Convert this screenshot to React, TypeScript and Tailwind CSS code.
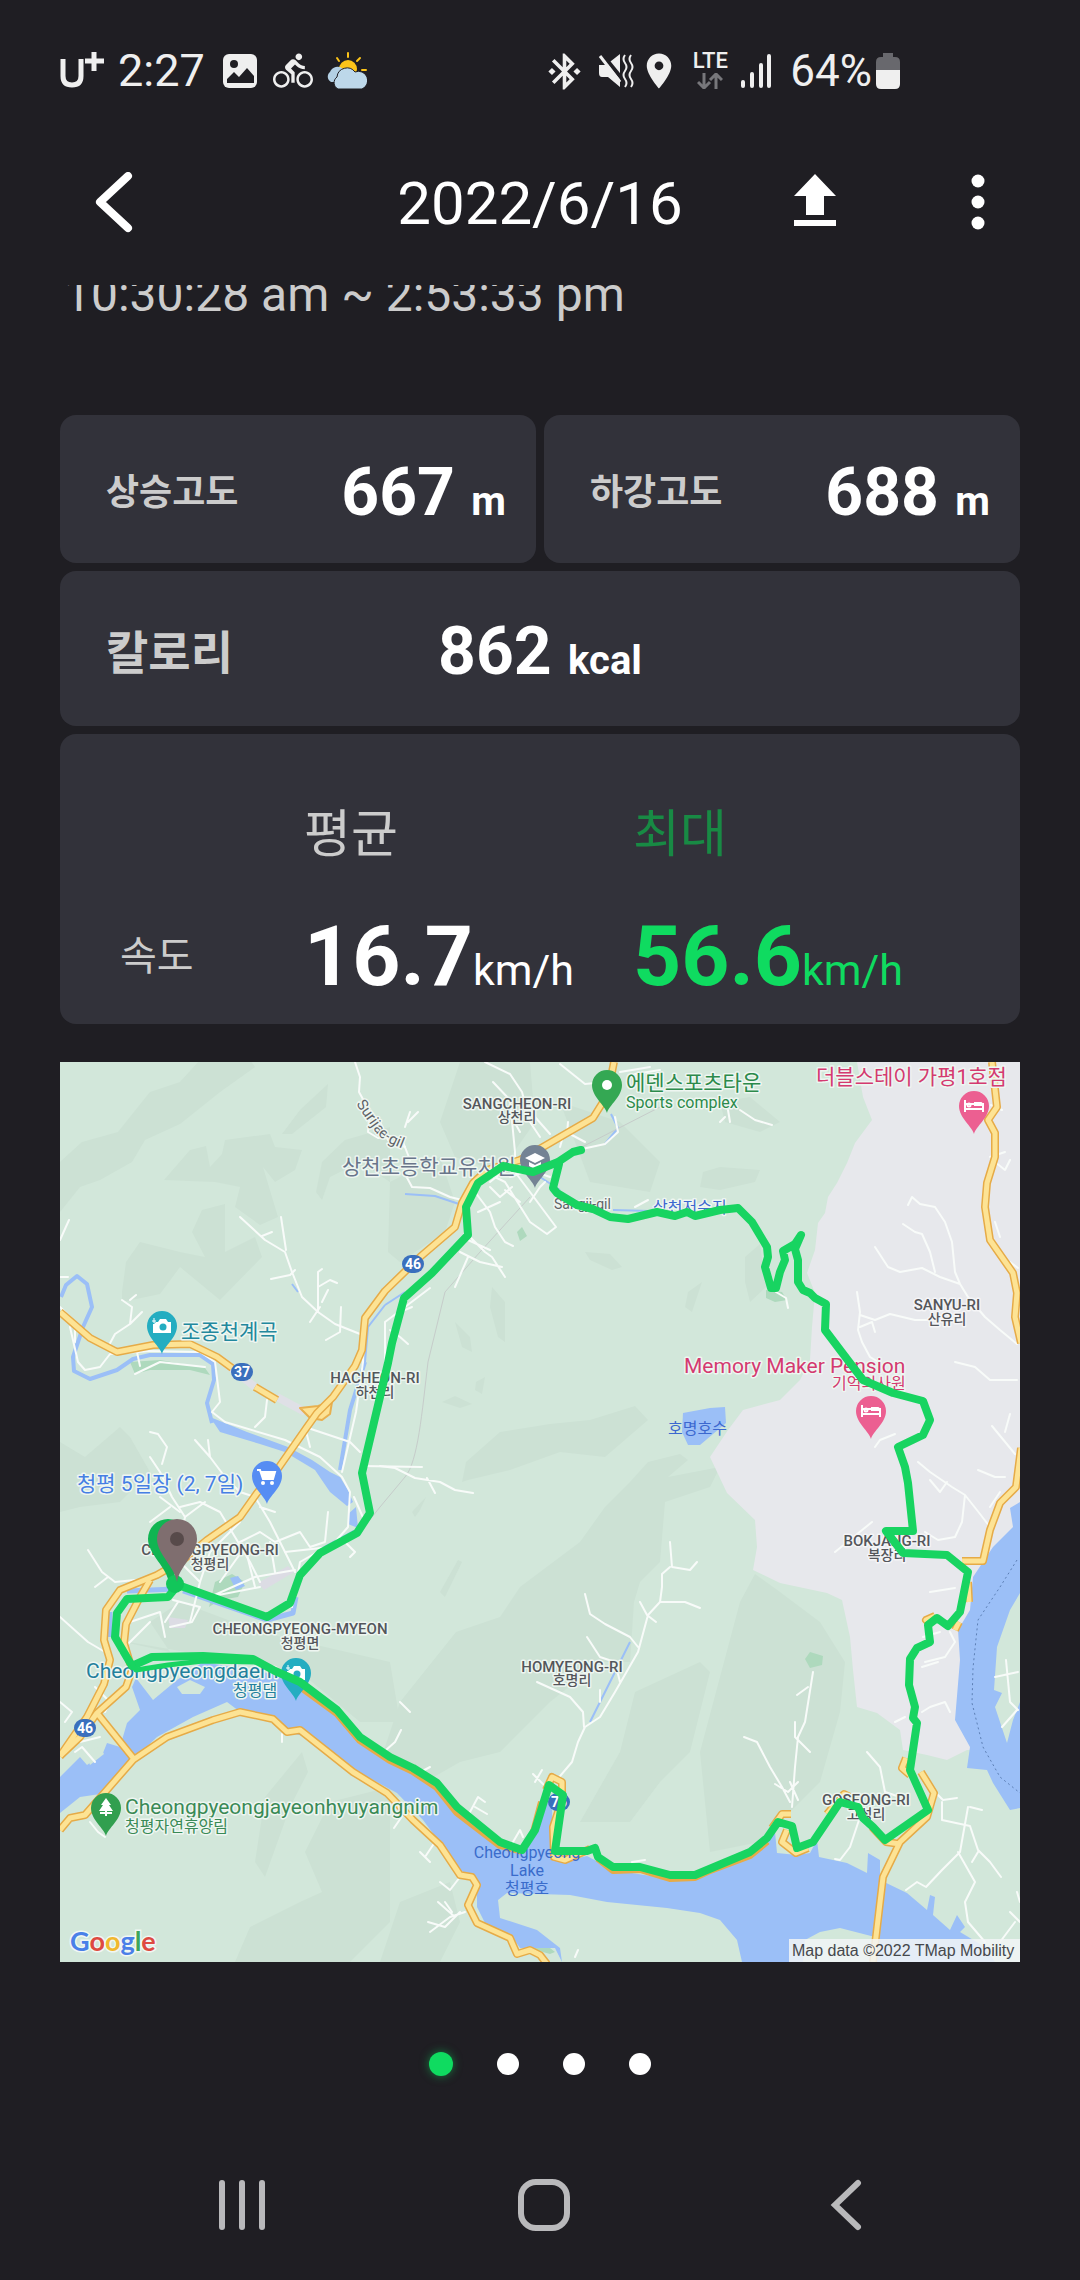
import React from 'react';
import { MdBluetoothConnected, MdDirectionsBike, MdLocationOn } from 'react-icons/md';

type LabelProps = {
  x: number;
  y: number;
  text: string;
  className: string;
  halo?: string;
};

const HALO = '#eef6f1';

function MapLabel({ x, y, text, className, halo = HALO }: LabelProps) {
  return (
    <text x={x} y={y} className={className} stroke={halo} strokeWidth={3} strokeLinejoin="round" paintOrder="stroke">
      {text}
    </text>
  );
}

const district = 'text-[15px] font-medium fill-[#54565b] [text-anchor:middle]';
const districtSub = 'text-[14px] font-medium fill-[#54565b] [text-anchor:middle]';
const poi = 'text-[21px]';
const poiSub = 'text-[16px]';
const lake = 'text-[16px] fill-[#3a6ccb] [text-anchor:middle]';

const labels: LabelProps[] = [
  { x: 457, y: 47, text: 'SANGCHEON-RI', className: district },
  { x: 457, y: 60, text: '상천리', className: districtSub },
  { x: 282, y: 112, text: '상천초등학교유치원', className: `${poi} fill-[#69758a]` },
  { x: 566, y: 28, text: '에덴스포츠타운', className: `${poi} fill-[#2c8a4b]` },
  { x: 566, y: 46, text: 'Sports complex', className: 'text-[16px] fill-[#2c8a4b]' },
  { x: 756, y: 22, text: '더블스테이 가평1호점', className: `${poi} fill-[#d43a70]` },
  { x: 593, y: 151, text: '상천저수지', className: `${poiSub} fill-[#3c68cf]` },
  { x: 494, y: 147, text: 'Sangji-gil', className: 'text-[14px] fill-[#5f6368]' },
  { x: 887, y: 248, text: 'SANYU-RI', className: district, halo: '#f5f5f7' },
  { x: 887, y: 262, text: '산유리', className: districtSub, halo: '#f5f5f7' },
  { x: 121, y: 277, text: '조종천계곡', className: `${poi} fill-[#23889d]` },
  { x: 315, y: 321, text: 'HACHEON-RI', className: district },
  { x: 315, y: 335, text: '하천리', className: districtSub },
  { x: 624, y: 311, text: 'Memory Maker Pension', className: `${poi} fill-[#d43a70]` },
  { x: 772, y: 327, text: '기억의사원', className: `${poiSub} fill-[#d43a70]` },
  { x: 608, y: 372, text: '호명호수', className: `${poiSub} fill-[#3c68cf]`, halo: 'none' },
  { x: 17, y: 429, text: '청평 5일장 (2, 7일)', className: `${poi} fill-[#467fe4]` },
  { x: 150, y: 493, text: 'CHEONGPYEONG-RI', className: district },
  { x: 150, y: 507, text: '청평리', className: districtSub },
  { x: 240, y: 572, text: 'CHEONGPYEONG-MYEON', className: district },
  { x: 240, y: 586, text: '청평면', className: districtSub },
  { x: 26, y: 616, text: 'Cheongpyeongdaem', className: `${poi} fill-[#23809d]` },
  { x: 173, y: 634, text: '청평댐', className: `${poiSub} fill-[#23809d]` },
  { x: 512, y: 610, text: 'HOMYEONG-RI', className: district },
  { x: 512, y: 623, text: '호명리', className: districtSub },
  { x: 65, y: 752, text: 'Cheongpyeongjayeonhyuyangnim', className: `${poi} fill-[#3a8a56]` },
  { x: 65, y: 770, text: '청평자연휴양림', className: `${poiSub} fill-[#3a8a56]` },
  { x: 467, y: 796, text: 'Cheongpyeong', className: lake, halo: 'none' },
  { x: 467, y: 814, text: 'Lake', className: lake, halo: 'none' },
  { x: 467, y: 832, text: '청평호', className: lake, halo: 'none' },
  { x: 827, y: 484, text: 'BOKJANG-RI', className: district, halo: '#f5f5f7' },
  { x: 827, y: 498, text: '복장리', className: districtSub, halo: '#f5f5f7' },
  { x: 806, y: 743, text: 'GOSEONG-RI', className: district },
  { x: 806, y: 757, text: '고성리', className: districtSub },
];

// darker forest relief
const relief = [
  'M0,100 L22,80 58,70 90,30 120,20 140,-2 190,-2 195,5 160,30 120,62 85,78 72,100 40,118 20,125 0,150Z',
  'M222,72 L240,48 268,22 266,45 232,72Z',
  'M104,118 L130,88 146,84 150,105 162,92 165,78 210,72 215,85 242,88 235,108 215,120 203,105 218,155 200,163 175,145 180,125 155,120Z',
  'M62,230 L66,200 80,180 120,190 145,195 132,170 142,148 165,142 165,190 195,175 202,195 160,238 120,205 100,232 62,240Z',
  'M256,130 L262,100 285,78 330,65 330,120 300,100 270,115 262,138Z',
  'M400,0 L470,0 475,60 440,110 395,95 380,60Z',
  'M330,120 L380,95 395,140 385,170 340,200 328,190Z',
  'M500,40 L560,60 600,100 590,130 530,120Z',
  'M525,190 L550,192 562,205 552,208 530,198Z M432,225 L445,240 445,280 438,275 430,245Z M628,230 L642,220 632,250 625,245Z M395,260 L410,275 412,290 402,285Z',
  'M643,110 L660,105 700,108 695,120 660,128 640,125Z M685,195 L700,182 706,225 690,240 685,220Z',
  'M402,420 L406,400 440,370 490,362 530,358 575,344 588,358 545,395 500,390 450,408 408,418Z',
  'M382,340 L395,334 412,342 400,346Z M416,320 L425,315 422,332 415,328Z',
  'M396,570 L440,555 460,525 520,480 545,445 570,420 588,400 620,392 628,398 608,415 660,405 650,425 605,440 600,500 580,520 574,540 570,600 540,600 490,640 440,690 400,700 330,740 320,700 340,640Z',
  'M380,530 L398,498 402,500 385,535Z M352,450 L366,435 360,448 355,455Z',
  'M575,630 L640,600 650,610 630,690 600,720 570,760 520,760 560,690Z',
  'M680,540 L695,512 720,530 760,560 785,600 780,650 760,720 700,780 650,790 640,690Z',
  'M195,800 L205,735 242,690 248,710 230,745 205,815Z M245,790 L270,740 330,725 330,860 290,900 175,900 190,865 240,840 262,830Z',
  'M320,900 L340,840 390,820 400,860 380,900Z',
  'M0,380 L25,395 60,365 70,375 90,410 60,440 20,445 0,450Z',
  'M40,575 L110,590 90,560 120,540 200,570 330,600 340,660 300,660 240,610Z',
  'M660,40 L690,35 720,60 700,70 665,60Z',
];

const minorRoads = [
  'M295,0 L300,15 299,30 310,50 308,70 318,76 330,74 343,80 350,98 345,112 352,125 370,126 390,135 402,138',
  'M180,155 L205,178 225,190 232,210 242,235 258,250 275,262 300,272',
  'M221,155 L226,188 M202,174 L212,170 M211,217 L230,213 235,208 M258,250 L258,210 262,207 M258,225 L270,218 277,221 M262,240 L268,228 M250,260 L260,245 M266,278 L280,270 281,245',
  'M0,178 L9,158 M0,215 L8,215 M0,245 L15,260 15,280 M48,285 L55,272 70,262 72,245 62,238 M70,262 L82,250 M70,238 L76,233',
  'M10,265 L18,300 25,308 40,305 50,292 90,289 140,290 155,300 160,340 152,350 165,360 225,378 260,395 282,415 290,430 288,465 275,480 240,500 232,545',
  'M75,312 L100,300 145,305 M77,290 L80,304',
  'M207,338 L205,355 195,365 M245,365 L290,380 300,390 M302,260 L303,300 296,350 282,410 M302,404 L362,405 M294,435 L305,460 M250,385 L245,365',
  'M325,305 L325,260 345,245 370,226 M330,268 L340,275 348,282 M340,250 L352,245',
  'M90,370 L98,372 107,385 102,402 M90,395 L100,410 112,435 125,455 122,470 M135,378 L150,395 165,415 180,430 195,435 M148,378 L150,395',
  'M120,445 L140,440 160,450 172,470 190,500 200,520 M195,435 L210,460 225,490 235,510 M125,455 L145,440 M100,435 L120,450 M110,445 L90,460 M200,445 L215,450',
  'M140,520 L150,490 180,460 M150,535 L195,515 235,508 M180,480 L200,470 215,480 240,470 250,485 265,480 268,450 M215,510 L210,480 M160,520 L185,485 195,525 M120,500 L140,520 130,560 M148,535 L200,525',
  'M113,538 L140,545 132,560 110,565 M105,560 L118,540 M70,560 L100,550 105,575 M60,590 L90,560 M0,555 L28,580 45,590 M28,488 L42,510 55,520 75,518 M35,525 L48,515 M280,475 L295,490 290,495 M225,490 L270,485',
  'M35,625 L50,640 45,650 M0,640 L12,650 5,660 M15,690 L22,685 35,700 M30,760 L38,770 45,775 M20,680 L40,675',
  'M425,0 L450,12 462,30 470,60 480,75 M433,20 L450,38 455,90 455,105 M500,2 L525,22 545,20 M450,52 L460,70 M320,60 L328,78 345,85 M348,60 L358,50 M350,50 L345,65',
  'M425,110 L445,120 470,160 487,172 496,165 470,130 455,110 M430,125 L440,135 452,125 M440,112 L430,120 M445,128 L460,140 M470,140 L480,125 485,120 M450,115 L470,108 490,115',
  'M415,130 L430,150 435,165 445,180 453,184 M418,150 L440,140 M410,175 L425,190 432,195 445,215 M395,225 L408,195 M400,190 L420,200 442,205 M408,178 L430,188 M402,180 L405,170',
  'M500,85 L502,78 M508,60 L507,72 M522,87 L545,82 558,70 555,55 M475,55 L490,72 M510,72 L525,80 M560,10 L590,5 M575,12 L600,8 M668,48 L670,60 M680,48 L695,58 712,63 M575,145 L588,138',
  'M848,143 L852,135 860,142 875,145 885,160 892,180 895,210 900,222 M843,162 L855,170 862,172 870,190 875,210 M815,185 L828,205 840,210 862,206 880,215 900,222 908,235 925,255 940,268 957,282',
  'M797,230 L800,250 798,268 802,280 810,295 820,301 M800,253 L815,258 830,252 855,258 885,258 M800,265 L812,260 815,270 M716,230 L726,236 728,246 M895,300 L915,305 930,318 957,318 M660,60 L665,55',
  'M935,100 L945,108 950,98 M930,95 L945,90 M935,160 L940,175 M950,200 L958,206 M931,43 L942,48',
  'M858,400 L870,410 892,425 905,433 920,452 930,465 M870,418 L880,430 887,420 M905,433 L902,460 895,475 878,478 865,470 M932,364 L955,392 M945,370 L950,352 M918,408 L935,415 945,415 M930,445 L940,430 M870,530 L895,526 M863,575 L880,570 M890,570 L895,580 885,595 865,600 M862,605 L878,600 M775,490 L812,460 M815,385 L820,378 835,372',
  'M862,650 L870,645 885,640 890,650 M835,660 L845,655 M946,598 L950,640 958,648 M935,615 L958,610 M957,648 L942,665',
  'M807,690 L820,705 825,730 840,735 M800,755 L790,785 780,798 775,797 M876,731 L883,738 897,736 M882,740 L882,758 910,764 918,788 930,800 941,815 M910,745 L922,748 M908,745 L900,790 882,808 866,825 857,820 846,828 M898,790 L915,820 905,840 908,860 925,880 M912,800 L918,790 M950,850 L960,860 M940,880 L955,860 M957,830 L960,840',
  'M684,675 L697,680 710,705 722,725 730,740 M753,610 L745,660 738,675 735,705 732,745 M737,633 L748,625 M735,660 L735,675 750,690 M715,722 L728,730 M738,720 L728,730 M738,738 L730,720',
  'M320,404 L335,406 355,416 380,420 395,428 413,431 M367,416 L375,431 M610,480 L612,505 630,508 637,500 M610,505 L602,512 602,525 600,540 588,553 578,590 555,630 540,655 525,665 518,680 512,700 495,720 M600,540 L625,540 640,546 M580,540 L587,553 596,560 M525,532 L530,552 545,562 570,575 578,585 M527,575 L540,595 555,600 M477,620 L510,635 523,650 524,665 M540,628 L540,640 M555,600 L560,620',
  'M326,688 L335,680 341,668 M357,712 L370,705 M410,750 L418,735 425,740 M415,745 L427,752 M475,720 L482,708 M473,712 L485,724 M453,780 L460,768 463,775 M360,790 L370,800 M375,780 L365,795 M380,820 L390,828 400,815 M368,860 L385,865 400,850 M370,870 L390,855 405,850 M385,840 L392,850 M378,840 L395,855 M515,895 L518,888 M572,800 L585,798 M222,672 L222,680 M334,766 L345,750 M340,640 L350,650',
];

const highways = [
  'M554,0 L550,20 543,40 533,56 507,71 483,85 460,98 427,108 413,121 402,141 395,165 360,195 325,229 305,256 302,288 295,304 273,335 257,351 247,365 217,408 197,431 180,455 147,478 123,498 97,513 60,528 46,548 44,578 50,598 44,622 27,655 0,694',
  'M90,518 L80,535 66,562 64,581 72,608 66,625 37,651 20,675 0,694',
  'M37,651 L74,697',
  'M0,768 L10,756 25,753 73,698 107,675 153,658 180,650 213,657 227,670 240,668 293,710 327,731 353,758 380,783 400,813 412,815 417,823 408,843 417,861 450,876 457,892 470,888 480,893 487,902',
  'M0,250 L30,276 57,290 93,283 130,282 157,295 172,306',
  'M195,325 L217,338',
  'M932,0 L937,45 928,58 935,71 935,95 927,121 925,145 930,178 953,211 957,231 955,255 961,281',
  'M961,386 L956,425 940,441 930,468 923,499 902,499',
  'M813,900 L823,815 840,780 867,755 874,731 861,710 M840,782 L826,780 812,765',
  'M846,696 L842,706 850,713 M767,752 L784,732 796,738 M712,766 L722,752 731,752 M727,768 L722,780 736,791 748,786',
  'M486,728 L492,715 502,720 502,738 493,765 494,795 505,798 530,787 M870,562 L866,558 875,554 M895,568 L899,560 M909,540 L908,520',
];

const shoreRoad =
  'M240,624 L277,651 300,678 330,698 353,709 377,725 397,750 440,783 462,789 M474,770 L482,740 M538,796 L553,808 580,807 610,816 635,815 650,808 690,793 707,779';

const route =
  'M521,88 L513,90 498,100 473,110 443,104 418,121 406,145 408,173 372,211 344,236 332,281 328,301 302,411 310,451 297,471 260,491 240,513 230,541 207,555 118,523 108,535 67,537 57,551 55,575 72,604 92,595 143,594 193,597 215,609 240,620 277,648 300,675 330,695 353,706 377,721 397,745 440,780 462,788 475,768 489,723 503,733 495,789 527,789 535,786 538,795 553,805 580,805 610,813 635,813 690,790 707,776 718,760 732,764 737,786 753,780 780,740 798,745 803,756 813,765 825,778 868,748 850,708 857,661 853,656 855,645 849,623 850,597 857,586 870,580 868,563 877,556 888,564 900,550 908,510 887,493 843,491 826,469 853,469 848,421 845,405 838,385 863,373 870,358 863,339 833,331 803,318 790,301 765,268 766,242 755,236 750,231 743,228 738,220 738,198 735,187 741,173 735,182 723,189 725,198 720,210 716,226 711,226 705,205 708,195 707,185 692,160 678,146 660,148 635,154 627,150 615,154 597,150 568,157 550,155 533,147 517,143 497,131 493,126 499,102';

type PinProps = {
  x: number;
  y: number;
  color: string;
  children: React.ReactNode;
};

function Pin({ x, y, color, children }: PinProps) {
  return (
    <g transform={`translate(${x} ${y})`}>
      <path d="M0,28 C-2,20 -15,12 -15,0 A15,15 0 0 1 15,0 C15,12 2,20 0,28Z" fill={color} />
      {children}
    </g>
  );
}

function Bed() {
  return (
    <g fill="none" stroke="#fff" strokeWidth={2}>
      <path d="M-9,-6 V6 M-9,3 H9 M9,6 V-2 H-9" />
      <path d="M0,-4 H7 Q9,-4 9,0 H0Z" fill="#fff" stroke="none" />
      <circle cx="-5" cy="-1" r="1.5" />
    </g>
  );
}

function Camera() {
  return (
    <g>
      <path d="M-9,-4 H-4 L-2,-7 H4 L6,-4 H9 V7 H-9Z" fill="#fff" />
      <circle cx="1" cy="1" r="3.5" fill="#24adc1" />
      <path d="M-9,-8 V-2 M-12,-5 H-6" stroke="#24adc1" strokeWidth={3} />
      <path d="M-8,-8 V-3 M-10,-5 H-6" stroke="#fff" strokeWidth={1} />
    </g>
  );
}

function Shield({ x, y, num }: { x: number; y: number; num: string }) {
  return (
    <g>
      <rect x={x - 11} y={y - 9} width={22} height={18} rx={9} fill="#3a6fbd" />
      <text x={x} y={y + 5} className="text-[14px] font-bold fill-white [text-anchor:middle]">
        {num}
      </text>
    </g>
  );
}

function RouteMap() {
  return (
    <svg viewBox="0 0 960 900" className="block w-full h-auto mt-[38px]" role="img" aria-label="Route map">
      <rect width="960" height="900" fill="#d2e7da" />
      <g fill="#cce1d4">
        {relief.map((d) => (
          <path key={d} d={d} />
        ))}
      </g>

      {/* built-up land on the east side */}
      <path
        d="M797,0 L803,35 812,58 795,81 787,101 777,121 768,135 765,151 758,161 755,188 747,211 755,231 752,265 750,298 740,318 720,338 683,348 668,368 650,395 667,431 695,458 697,485 693,508 720,521 767,531 782,538 790,575 793,608 797,645 817,651 840,668 843,688 867,693 887,698 907,688 960,688 960,0Z"
        fill="#e7e8ec"
      />
      <g fill="#aed9bd">
        <path d="M149,545 L155,520 172,512 185,520 178,535 160,538Z" />
        <path d="M70,300 L100,298 145,306 150,313 130,308 90,308 75,312Z" />
        <path d="M457,170 L462,165 467,174 460,179Z" />
        <path d="M745,597 L750,590 763,594 762,603 750,606Z" />
        <path d="M706,228 L722,230 727,238 715,240 706,236Z" />
        <path d="M465,885 L485,882 495,890 490,892Z" />
      </g>

      <g fill="#9bbff7">
        <path d="M960,440 L950,446 953,465 933,485 913,515 910,548 898,568 900,598 895,658 910,685 907,706 927,708 933,721 950,748 960,746Z" />
        <path d="M0,715 L20,695 27,703 43,691 47,681 60,685 67,661 80,648 72,625 76,616 93,638 117,618 143,600 213,612 240,624 277,652 300,679 330,699 377,725 400,752 440,783 462,790 475,768 487,740 492,745 493,790 510,798 527,794 553,808 610,817 650,810 690,795 715,770 717,791 737,793 750,791 757,778 759,795 787,801 807,811 808,791 820,798 820,818 847,831 867,848 870,833 875,835 873,853 890,868 897,853 905,865 900,870 925,885 935,900 682,900 677,878 660,858 640,851 607,846 547,840 510,833 447,831 438,838 440,856 477,868 500,886 502,900 495,886 460,886 453,876 427,865 417,845 417,818 400,808 383,785 363,758 337,731 300,711 247,675 227,670 213,660 187,655 167,640 133,655 97,675 73,698 47,731 20,735 0,751Z" />
        <path d="M622,370 L623,351 650,346 665,345 666,361 640,383 628,383Z" />
        <path d="M150,355 L187,370 228,385 252,398 270,410 280,415 288,428 293,440 287,444 270,430 255,408 225,390 200,382 160,370Z" />
        <path d="M288,452 L296,445 298,466 288,462Z M170,516 L178,514 185,524 176,528Z" />
      </g>
      <path d="M960,531 L950,548 937,585 934,628 942,631 935,645 947,681 953,658 960,640Z" fill="#d2e7da" />
      <path d="M743,900 L745,878 760,870 780,866 815,875 815,900Z" fill="#d2e7da" />
      <g fill="#d2e7da">
        <path d="M117,625 L130,618 145,625 140,632 122,632Z" />
        <path d="M25,690 L40,685 44,692 30,703Z" />
      </g>
      <g fill="none" stroke="#9bbff7" strokeWidth={4} strokeLinejoin="round">
        <path d="M1,235 L6,223 17,214 27,222 32,245 23,265 13,295 14,309 30,317 57,308 73,297 90,293 140,293 153,302 154,318 147,341 152,361" />
        <path d="M305,300 L290,348 280,408" />
        <path d="M325,243 L308,265 305,300 M325,243 L345,230" strokeWidth={2} />
        <path d="M295,470 L262,488 M123,529 L207,558 233,551 236,535 M67,529 L115,527 M50,550 L50,575" strokeWidth={5} />
        <path d="M345,132 L375,134 402,143 M480,115 L500,128 M551,52 L558,66 545,82 M553,148 L590,149 M570,580 L530,660 M232,222 L238,230" strokeWidth={2} />
      </g>
      <path d="M957,498 L940,525 918,558 913,606 912,641 923,685 940,715 960,731" fill="none" stroke="#5c7fb5" strokeWidth={1} strokeDasharray="2 3" />

      <path d="M368,300 C362,350 358,400 345,415 L320,445 300,470 M368,300 L385,230 420,190 470,135 M520,86 L600,45" fill="none" stroke="#c6ccca" strokeWidth={1} />
      <path d="M198,521 L228,504 234,510 204,528Z M108,555 L128,558 125,566 110,566Z" fill="#dcdce4" />

      <g fill="none" stroke="#f8fbf9" strokeWidth={2} strokeLinejoin="round" strokeLinecap="round">
        {minorRoads.map((d) => (
          <path key={d} d={d} />
        ))}
      </g>

      <g fill="none" strokeLinejoin="round">
        <path d="M160,297 L195,325 M217,335 L245,350" stroke="#dfe0e6" strokeWidth={8} />
        <path d="M240,346 L258,344 272,340 270,352 262,358 250,356Z" fill="#fde293" stroke="#e8b04f" strokeWidth={2} />
        {highways.map((d) => (
          <path key={d} d={d} stroke="#e6ab47" strokeWidth={8} />
        ))}
        <path d={shoreRoad} stroke="#e6ab47" strokeWidth={8} />
        {highways.map((d) => (
          <path key={d} d={d} stroke="#fde394" strokeWidth={5} />
        ))}
      </g>

      <Shield x={353} y={202} num="46" />
      <Shield x={182} y={310} num="37" />
      <Shield x={25} y={666} num="46" />
      <Shield x={499} y={740} num="75" />

      <Pin x={547} y={23} color="#34a853">
        <circle r="5" fill="#fff" />
      </Pin>
      <Pin x={475} y={98} color="#748394">
        <path d="M0,-7 L10,-2 0,3 -10,-2Z" fill="#fff" />
        <path d="M-6,2 L0,5 6,2 V6 L0,9 -6,6Z" fill="#fff" />
      </Pin>
      <Pin x={914} y={44} color="#ec5f91">
        <Bed />
      </Pin>
      <Pin x={811} y={349} color="#ec5f91">
        <Bed />
      </Pin>
      <Pin x={102} y={264} color="#24adc1">
        <Camera />
      </Pin>
      <Pin x={236} y={611} color="#24adc1">
        <Camera />
      </Pin>
      <Pin x={207} y={414} color="#568df3">
        <path d="M-10,-6 H-7 L-4,3 H6 L8,-4 H-6" fill="#fff" stroke="#fff" strokeWidth={2} />
        <circle cx="-4" cy="7" r="2" fill="#fff" />
        <circle cx="5" cy="7" r="2" fill="#fff" />
      </Pin>
      <Pin x={46} y={746} color="#319f4f">
        <path d="M0,-10 L5,-3 H3 L7,3 H1 V8 H-1 V3 H-7 L-3,-3 H-5Z" fill="#fff" />
        <path d="M-6,5 H6" stroke="#fff" strokeWidth={2} />
      </Pin>

      {labels.map((label) => (
        <MapLabel key={label.text} {...label} />
      ))}
      <path id="surijae" d="M296,42 L317,72 Q327,82 352,90" fill="none" />
      <text className="text-[15px] fill-[#5f6368]" stroke={HALO} strokeWidth={3} paintOrder="stroke">
        <textPath href="#surijae">Surijae-gil</textPath>
      </text>

      {/* recorded track */}
      <path d={route} fill="none" stroke="#18d461" strokeWidth={8} strokeLinejoin="round" strokeLinecap="round" />
      <path d="M64,590 L76,608 108,603 143,599 200,600" fill="none" stroke="#18d461" strokeWidth={5} strokeLinejoin="round" />

      <path d="M109,521 C107,505 88,492 88,477 A20,20 0 0 1 128,477 C128,492 114,505 113,521Z" fill="#10b552" />
      <circle cx="115" cy="522" r="9" fill="#12c65a" />
      <path d="M117,520 C115,505 97,492 97,477 A20,20 0 0 1 137,477 C137,492 119,505 117,520Z" fill="#7f6e6f" />
      <circle cx="117" cy="477" r="7" fill="#574a4a" />

      <text x="10" y="889" className="text-[27px] font-bold font-[Lato,sans-serif]" stroke="#fff" strokeWidth={3} strokeOpacity={0.7} paintOrder="stroke">
        <tspan className="fill-[#4a80e8]">G</tspan>
        <tspan className="fill-[#de4a41]">o</tspan>
        <tspan className="fill-[#f0b82e]">o</tspan>
        <tspan className="fill-[#4a80e8]">g</tspan>
        <tspan className="fill-[#3fa65a]">l</tspan>
        <tspan className="fill-[#de4a41]">e</tspan>
      </text>
      <rect x="729" y="877" width="231" height="23" fill="#f2f5f6" fillOpacity={0.85} />
      <text x="732" y="894" className="text-[16px] fill-[#45484c] font-['Liberation_Sans',sans-serif]">
        Map data ©2022 TMap Mobility
      </text>
    </svg>
  );
}

function StatusBar() {
  return (
    <div className="h-[122px] pt-5 pl-[58px] pr-[180px] flex items-center justify-between text-[#efefef]">
      <div className="flex items-center">
        <svg className="w-[46px] h-[38px]" viewBox="0 0 46 38" fill="none" stroke="currentColor" aria-label="U+">
          <path d="M5,7 V24 Q5,33 14,33 Q23,33 23,24 V7" strokeWidth={5} />
          <path d="M36,0 V19 M27,9 H46" strokeWidth={5} />
        </svg>
        <span className="ml-[14px] text-[45px] leading-[52px]">2:27</span>
        <svg className="ml-[18px] w-[34px] h-[34px]" viewBox="0 0 34 34">
          <rect width="34" height="34" rx="6" fill="currentColor" />
          <circle cx="11" cy="10" r="4" fill="#1f1e23" />
          <path d="M4,29 V25 L11,18 16,23 24,14 31,22 V29Z" fill="#1f1e23" />
        </svg>
        <MdDirectionsBike className="ml-4 w-10 h-10" />
        <svg className="ml-[14px] w-10 h-[38px]" viewBox="0 0 40 38">
          <g stroke="#fcc419" strokeWidth={2} strokeLinecap="round">
            <path d="M21,1 V5 M10,6 L12,9 M33,6 L30,9 M39,18 H35 M34,27 L33,25" />
          </g>
          <circle cx="21" cy="17" r="9" fill="#fcc419" />
          <path d="M4,30 A6,6 0 0 1 3,20 A8,8 0 0 1 16,17 L14,30Z" fill="#b3d0e4" />
          <path
            d="M11,37 A7,7 0 0 1 10,25 A10,10 0 0 1 28,20 A9,9 0 0 1 35,37Z"
            fill="#bdd8ea"
            stroke="#1f1e23"
            strokeWidth={1}
          />
        </svg>
      </div>
      <div className="flex items-center">
        <MdBluetoothConnected className="w-[43px] h-[43px]" />
        <svg className="ml-3 w-9 h-9" viewBox="0 0 36 36" fill="currentColor">
          <path d="M1,12 H8 L22,1 V34 L10,24 H4 Q1,24 1,20Z" />
          <path d="M4,1 L25,27" stroke="#1f1e23" strokeWidth={4} />
          <path d="M2,3 L22,29" stroke="currentColor" strokeWidth={3} />
          <path
            d="M27,2 q-3,4 0,8 t0,8 t0,8 t0,8 M33,2 q-3,4 0,8 t0,8 t0,8 t0,8"
            fill="none"
            stroke="currentColor"
            strokeWidth={2}
          />
        </svg>
        <MdLocationOn className="ml-1 w-[42px] h-[42px]" />
        <div className="ml-3 w-[36px] flex flex-col items-center gap-1">
          <span className="text-[22px] leading-4 font-medium">LTE</span>
          <svg className="w-[26px] h-4" viewBox="0 0 26 16" fill="none" stroke="#77777b" strokeWidth={3}>
            <path d="M7,0 V14 M1,9 L7,15 13,9 M19,16 V2 M13,7 L19,1 25,7" />
          </svg>
        </div>
        <svg className="ml-3 w-8 h-[34px]" viewBox="0 0 32 34" stroke="currentColor" strokeWidth={4} strokeLinecap="round">
          <path d="M3,28 V32 M12,20 V32 M21,11 V32 M29,2 V32" />
        </svg>
        <span className="ml-[18px] text-[44px] leading-[52px]">64%</span>
        <svg className="ml-1 w-6 h-9" viewBox="0 0 24 36">
          <path d="M7,0 H17 V4 H19 Q24,4 24,9 V17 H0 V9 Q0,4 5,4 H7Z" fill="#68686d" />
          <path d="M0,17 H24 V31 Q24,36 19,36 H5 Q0,36 0,31Z" fill="currentColor" />
        </svg>
      </div>
    </div>
  );
}

function Header() {
  return (
    <header className="h-[163px] px-[94px] grid grid-cols-[1fr_auto_1fr] items-center text-white">
      <button aria-label="Back" className="justify-self-start">
        <svg className="w-10 h-[64px]" viewBox="0 0 40 64" fill="none" stroke="currentColor" strokeWidth={8} strokeLinecap="round" strokeLinejoin="round">
          <path d="M34,4 L6,30 34,56" />
        </svg>
      </button>
      <h1 className="text-[60px] leading-[70px]">2022/6/16</h1>
      <div className="flex justify-end items-center gap-[134px]">
        <button aria-label="Share">
          <svg className="w-[42px] h-[60px]" viewBox="0 0 42 60" fill="currentColor">
            <path d="M21,0 L42,22 H30 V41 H12 V22 H0Z M0,46 H42 V52 H0Z" />
          </svg>
        </button>
        <button aria-label="More options">
          <svg className="w-4 h-[60px]" viewBox="0 0 16 60" fill="currentColor">
            <circle cx="8" cy="7" r="6.5" />
            <circle cx="8" cy="28" r="6.5" />
            <circle cx="8" cy="49" r="6.5" />
          </svg>
        </button>
      </div>
    </header>
  );
}

function ElevationCard({ label, value }: { label: string; value: number }) {
  return (
    <div className="flex-1 h-[148px] pt-2 pl-[46px] pr-[30px] rounded-2xl bg-[#32323a] flex items-center justify-between">
      <span className="text-[36px] leading-[52px] font-bold text-[#cccccc]">{label}</span>
      <span className="pt-2 text-[66px] leading-[76px] font-bold text-white">
        {value} <span className="text-[40px]">m</span>
      </span>
    </div>
  );
}

export default function App() {
  return (
    <div className="min-h-screen flex flex-col bg-[#1f1e23] font-[Roboto,'Noto_Sans_CJK_KR',sans-serif]">
      <StatusBar />
      <Header />
      <main className="px-[60px] overflow-hidden">
        <p className="-mt-5 pl-1 h-[60px] text-[48px] leading-[60px] text-[#cccccc]">10:30:28 am ~ 2:53:33 pm</p>

        <section className="mt-[90px] flex flex-col gap-2">
          <div className="flex gap-2">
            <ElevationCard label="상승고도" value={667} />
            <ElevationCard label="하강고도" value={688} />
          </div>
          <div className="h-[155px] pt-2 px-[46px] rounded-2xl bg-[#32323a] grid grid-cols-[1fr_auto_1fr] items-center">
            <span className="text-[46px] leading-[64px] font-bold text-[#cccccc]">칼로리</span>
            <span className="pt-2 text-[66px] leading-[76px] font-bold text-white">
              862 <span className="text-[40px]">kcal</span>
            </span>
          </div>
          <div className="h-[290px] pt-[60px] rounded-2xl bg-[#32323a]">
            <table className="w-full table-fixed text-left">
              <thead>
                <tr className="h-[82px] text-[51px] leading-[78px]">
                  <td className="w-[244px]" />
                  <th className="w-[329px] p-0 font-normal text-[#cccccc]">평균</th>
                  <th className="p-0 font-normal text-[#188a44]">최대</th>
                </tr>
              </thead>
              <tbody>
                <tr className="h-[131px] align-bottom">
                  <th className="p-0 pl-[60px] text-[40px] leading-[100px] font-normal text-[#cccccc]">속도</th>
                  <td className="p-0 text-white">
                    <span className="text-[84px] leading-[100px] font-bold">16.7</span>
                    <span className="text-[43px] leading-[64px]">km/h</span>
                  </td>
                  <td className="p-0 text-[#0fdb60]">
                    <span className="text-[84px] leading-[100px] font-bold">56.6</span>
                    <span className="text-[43px] leading-[64px]">km/h</span>
                  </td>
                </tr>
              </tbody>
            </table>
          </div>
        </section>

        <RouteMap />
      </main>

      <div className="h-[204px] flex items-center justify-center gap-11">
        <span className="w-6 h-6 rounded-full bg-[#0fdb60] shadow-[0_0_10px_#0fdb6080]" />
        <span className="w-[22px] h-[22px] rounded-full bg-white" />
        <span className="w-[22px] h-[22px] rounded-full bg-white" />
        <span className="w-[22px] h-[22px] rounded-full bg-white" />
      </div>

      <nav className="h-[78px] mb-9 pl-[212px] pr-[204px] flex items-center justify-between text-[#b9b9bb]">
        <button aria-label="Recent apps" className="w-[60px] flex justify-center">
          <svg className="w-12 h-[54px]" viewBox="0 0 48 54" stroke="currentColor" strokeWidth={6} strokeLinecap="round">
            <path d="M4,5 V49 M24,5 V49 M44,5 V49" />
          </svg>
        </button>
        <button aria-label="Home" className="w-[60px] flex justify-center">
          <svg className="w-[54px] h-[54px]" viewBox="0 0 54 54" fill="none" stroke="currentColor" strokeWidth={6}>
            <rect x="4" y="4" width="46" height="46" rx="15" />
          </svg>
        </button>
        <button aria-label="Go back" className="w-[60px] flex justify-center">
          <svg className="w-8 h-[54px]" viewBox="0 0 32 54" fill="none" stroke="currentColor" strokeWidth={6} strokeLinecap="round">
            <path d="M28,5 L5,27 28,49" />
          </svg>
        </button>
      </nav>
    </div>
  );
}
